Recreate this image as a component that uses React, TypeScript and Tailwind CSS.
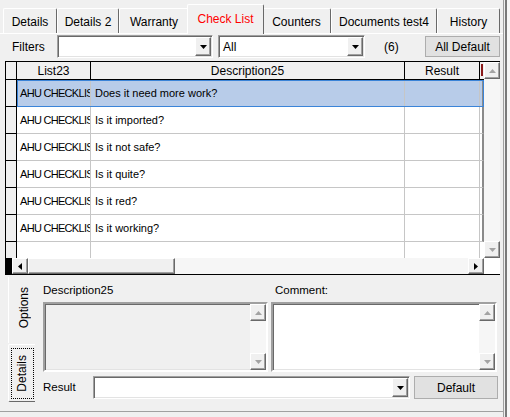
import type { ReactNode } from "react";

const RAISED =
  "border border-t-white border-l-white border-r-[#696969] border-b-[#696969] bg-[#f0f0f0] shadow-[inset_-1px_-1px_0_#a0a0a0]";
const SUNKEN =
  "border border-t-[#a0a0a0] border-l-[#a0a0a0] border-r-white border-b-white shadow-[inset_1px_1px_0_#696969,inset_-1px_-1px_0_#e3e3e3]";

const TABS = [
  { label: "Details", width: "w-[54px]" },
  { label: "Details 2", width: "w-[62px]" },
  { label: "Warranty", width: "w-[70px]" },
  { label: "Check List", width: "w-[77px]", active: true },
  { label: "Counters", width: "w-[69px]" },
  { label: "Documents test4", width: "w-[106px]" },
  { label: "History", width: "w-[63px]" },
];

const ROWS = [
  "Does it need more work?",
  "Is it imported?",
  "Is it not safe?",
  "Is it quite?",
  "Is it red?",
  "Is it working?",
];

type Dir = "up" | "down" | "left" | "right";

function Triangle({ dir, color }: { dir: Dir; color: string }) {
  if (dir === "up") {
    return (
      <svg width="7" height="4" viewBox="0 0 7 4">
        <path d="M0 4h7L3.5 0z" fill={color} />
      </svg>
    );
  }
  if (dir === "down") {
    return (
      <svg width="7" height="4" viewBox="0 0 7 4">
        <path d="M0 0h7L3.5 4z" fill={color} />
      </svg>
    );
  }
  if (dir === "left") {
    return (
      <svg width="4" height="7" viewBox="0 0 4 7">
        <path d="M4 0v7L0 3.5z" fill={color} />
      </svg>
    );
  }
  return (
    <svg width="4" height="7" viewBox="0 0 4 7">
      <path d="M0 0v7L4 3.5z" fill={color} />
    </svg>
  );
}

function ArrowButton({ dir, disabled, className }: { dir: Dir; disabled?: boolean; className: string }) {
  return (
    <div className={`flex shrink-0 items-center justify-center ${RAISED} ${className}`}>
      <Triangle dir={dir} color={disabled ? "#a3a3a3" : "#000000"} />
    </div>
  );
}

function VScroll({ className }: { className: string }) {
  return (
    <div className={`flex shrink-0 flex-col ${className}`}>
      <ArrowButton dir="up" disabled className="h-[17px] w-full" />
      <div className="flex-1 bg-[#f6f6f6]" />
      <ArrowButton dir="down" disabled className="h-[17px] w-full" />
    </div>
  );
}

function Combo({ className, text }: { className: string; text?: string }) {
  return (
    <div className={`flex items-center bg-white ${SUNKEN} ${className}`}>
      <span className="flex-1 truncate pl-[4px] text-[12px]">{text}</span>
      <ArrowButton dir="down" className="mr-px h-[19px] w-[16px]" />
    </div>
  );
}

function Tab({ label, width, active }: { label: string; width: string; active?: boolean }) {
  return (
    <div
      className={`flex shrink-0 items-center justify-center rounded-t-[2px] border-l border-t border-r border-l-white border-t-white border-r-[#696969] text-[12px] ${width} ${
        active ? "relative z-10 -mx-[2px] -mb-px h-[30px] bg-[#f0f0f0] pb-[2px] text-[#ff0000]" : "h-[25px] pt-px"
      }`}
    >
      {label}
    </div>
  );
}

function HeaderCell({ children, className }: { children?: ReactNode; className: string }) {
  return (
    <div className={`flex h-full shrink-0 items-center justify-center border-r border-black text-[12px] ${className}`}>
      {children}
    </div>
  );
}

function GridRow({ text, selected }: { text: string; selected?: boolean }) {
  return (
    <div className="flex h-[27px] shrink-0">
      <div className="h-full w-[11px] shrink-0 border-r border-b border-black bg-[#f0f0f0]" />
      <div
        className={`relative flex h-full flex-1 text-[11px] ${
          selected ? "z-10 bg-[#b8cce9] outline outline-1 -outline-offset-1 outline-[#3b84d8]" : "bg-white"
        }`}
      >
        <div className="flex h-full w-[74px] shrink-0 items-center overflow-hidden whitespace-nowrap border-r border-b border-[#c6c6c6] pl-[3px] tracking-[-0.7px]">
          AHU CHECKLIST
        </div>
        <div className="flex h-full w-[314px] shrink-0 items-center border-r border-b border-[#c6c6c6] pl-[4px]">
          {text}
        </div>
        <div className="h-full w-[75px] shrink-0 border-r border-b border-[#c6c6c6]" />
        <div className="h-full flex-1 border-r-2 border-b border-[#c6c6c6] border-r-[#8a8a8a]" />
      </div>
    </div>
  );
}

export default function App() {
  return (
    <div className="flex h-[417px] w-[510px] overflow-hidden bg-[#f0f0f0] font-['Liberation_Sans',Arial,sans-serif] text-black">
      <div className="flex w-[503px] shrink-0 flex-col">
        {/* tabs */}
        <div className="flex h-[34px] shrink-0 items-end border-b border-white pl-[3px]">
          {TABS.map((t) => (
            <Tab key={t.label} label={t.label} width={t.width} active={t.active} />
          ))}
        </div>

        {/* filters */}
        <div className="mt-px flex h-[23px] shrink-0 items-center">
          <span className="w-[57px] pl-[12px] text-[12px]">Filters</span>
          <Combo className="h-[23px] w-[156px]" />
          <Combo className="ml-[5px] h-[23px] w-[147px]" text="All" />
          <span className="ml-[19px] text-[12px]">(6)</span>
          <button
            type="button"
            className="ml-auto mr-[3px] h-[21px] w-[75px] border border-[#adadad] bg-[#e1e1e1] text-[12px]"
          >
            All Default
          </button>
        </div>

        {/* grid */}
        <div className="ml-[5px] mr-[3px] mt-[3px] flex h-[214px] shrink-0 flex-col border-l border-t border-b border-black">
          <div className="flex h-[196px] shrink-0">
            <div className="flex w-[478px] shrink-0 flex-col bg-white">
              <div className="flex h-[18px] shrink-0 border-b border-black bg-[#f0f0f0]">
                <HeaderCell className="w-[11px]" />
                <HeaderCell className="w-[74px]">List23</HeaderCell>
                <HeaderCell className="w-[314px]">Description25</HeaderCell>
                <HeaderCell className="w-[75px]">Result</HeaderCell>
                <div className="flex h-full flex-1 items-start pl-px">
                  <div className="mt-[2px] h-[12px] w-[2px] bg-[#8b1a1a]" />
                </div>
              </div>
              {ROWS.map((r, i) => (
                <GridRow key={r} text={r} selected={i === 0} />
              ))}
              <div className="flex flex-1">
                <div className="h-full w-[11px] shrink-0 border-r border-black bg-[#f0f0f0]" />
                <div className="h-full w-[74px] shrink-0 border-r border-[#c6c6c6]" />
                <div className="h-full w-[314px] shrink-0 border-r border-[#c6c6c6]" />
                <div className="h-full w-[75px] shrink-0 border-r border-[#c6c6c6]" />
              </div>
            </div>
            <VScroll className="w-[16px]" />
          </div>
          <div className="flex h-[16px] shrink-0">
            <div className="h-full w-[6px] shrink-0 bg-black" />
            <ArrowButton dir="left" className="h-full w-[16px]" />
            <div className={`h-full w-[147px] shrink-0 ${RAISED}`} />
            <div className="h-full w-[293px] shrink-0 bg-[#f6f6f6]" />
            <ArrowButton dir="right" className="h-full w-[16px]" />
            <div className="h-full flex-1 bg-white" />
          </div>
        </div>

        {/* detail panel */}
        <div className="mt-[2px] flex h-[135px] shrink-0 border-b border-[#a0a0a0]">
          <div className="flex w-[38px] shrink-0 flex-col pl-[8px]">
            <div className="flex h-[66px] w-[30px] items-center justify-center border-l border-white pb-[4px]">
              <span className="rotate-180 text-[12px] [writing-mode:vertical-rl]">Options</span>
            </div>
            <div className="mt-px flex h-[58px] w-[27px] items-center justify-center rounded-l-[2px] border-l border-t border-b border-l-white border-t-white border-b-[#696969]">
              <div className="flex h-[51px] w-[23px] items-center justify-center border border-dotted border-black">
                <span className="rotate-180 text-[12px] [writing-mode:vertical-rl]">Details</span>
              </div>
            </div>
          </div>

          <div className="flex flex-1 flex-col pl-[5px] pt-[3px]">
            <div className="flex h-[22px] shrink-0 items-start text-[11.5px]">
              <span className="w-[228px] pt-[2px]">Description25</span>
              <span className="pl-[4px] pt-[2px]">Comment:</span>
            </div>
            <div className="flex h-[70px] shrink-0">
              <div className={`flex h-full w-[225px] bg-[#f0f0f0] ${SUNKEN} border-2`}>
                <div className="flex-1" />
                <VScroll className="w-[16px]" />
              </div>
              <div className={`ml-[3px] flex h-full w-[226px] bg-white ${SUNKEN} border-2`}>
                <div className="flex-1" />
                <VScroll className="w-[16px]" />
              </div>
            </div>
            <div className="mt-[4px] flex h-[23px] shrink-0 items-center">
              <span className="w-[50px] text-[11.5px]">Result</span>
              <Combo className="h-[23px] w-[317px]" />
              <button
                type="button"
                className="ml-[4px] h-[23px] w-[84px] border border-[#adadad] bg-[#e1e1e1] text-[12px]"
              >
                Default
              </button>
            </div>
          </div>
        </div>
      </div>

      {/* splitter edge */}
      <div className="flex h-full flex-1">
        <div className="w-px bg-[#a0a0a0]" />
        <div className="w-px bg-[#f0f0f0]" />
        <div className="w-[2px] bg-[#7a7a7a]" />
        <div className="flex-1 bg-[#f7f7f7]" />
      </div>
    </div>
  );
}
